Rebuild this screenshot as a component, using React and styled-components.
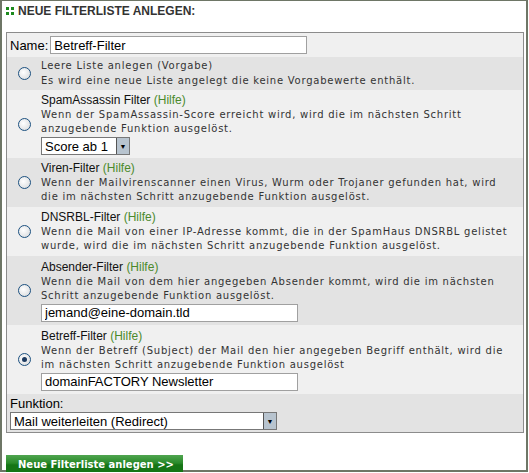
import React from 'react';
import styled, { createGlobalStyle } from 'styled-components';

const Global = createGlobalStyle`
  html, body { margin: 0; padding: 0; background: #fff; }
  body { font-family: "Liberation Sans", Arial, sans-serif; }
`;

const Frame = styled.div`
  border: 2px solid #6e7666;
  border-top: 1px solid #6e7666;
  box-sizing: border-box;
  padding: 3px 4px 0 4px;
  width: 528px;
  height: 472px;
`;

const Heading = styled.div`
  display: flex;
  align-items: center;
  gap: 4px;
  font: bold 12px "Liberation Sans", Arial, sans-serif;
  color: #333;
  height: 14px;
`;

const Dots = styled.span`
  display: grid;
  grid-template-columns: 3px 3px;
  gap: 2px;
  span { width: 3px; height: 3px; background: #1d8a1d; }
`;

const Table = styled.div`
  margin-top: 14px;
  width: 516px;
  border: 1px solid #8c8c8c;
`;

const Row = styled.div`
  display: flex;
  align-items: center;
  background: ${p => (p.$dark ? '#e3e3e3' : '#f0f0f0')};
  min-height: ${p => p.$h}px;
  box-sizing: border-box;
  padding: 2px 3px;
`;

const RadioCell = styled.div`
  width: 34px;
  display: flex;
  justify-content: center;
  flex-shrink: 0;
`;

const Radio = styled.span`
  width: 11px;
  height: 11px;
  border-radius: 50%;
  border: 1px solid #1c5180;
  background: radial-gradient(circle at 40% 40%, #fff, #d4d6d8);
  display: flex;
  align-items: center;
  justify-content: center;
  &::after {
    content: '';
    display: ${p => (p.$on ? 'block' : 'none')};
    width: 5px; height: 5px; border-radius: 50%; background: #1c3a60;
  }
`;

const Body = styled.div`
  flex: 1;
  display: flex;
  flex-direction: column;
  gap: 1px;
`;

const Title = styled.div`
  font-size: 12px;
  color: #111;
  line-height: 14px;
`;

const Help = styled.span`
  color: #4b8a2c;
`;

const Desc = styled.div`
  font: 10px "DejaVu Sans", Verdana, sans-serif;
  color: #333;
  line-height: 14px;
  letter-spacing: 0.75px;
  padding-right: 6px;
`;

const TextInput = styled.input`
  width: ${p => p.$w}px;
  height: 18px;
  box-sizing: border-box;
  border: 1px solid #a0a0a0;
  padding: 0 3px;
  font: 13px "Liberation Sans", Arial, sans-serif;
  color: #000;
  background: #fff;
`;

const Select = styled.div`
  width: ${p => p.$w}px;
  height: 18px;
  box-sizing: border-box;
  border: 1px solid #777;
  background: #fff;
  display: flex;
  align-items: center;
  justify-content: space-between;
  font: 13px "Liberation Sans", Arial, sans-serif;
  padding-left: 3px;
`;

const Arrow = styled.span`
  width: 12px;
  height: 16px;
  background: #b8c4cf;
  border-left: 1px solid #555;
  font-size: 7px;
  display: flex;
  align-items: center;
  justify-content: center;
  color: #000;
`;

const Label = styled.label`
  font-size: 13px;
  margin-right: 2px;
`;

const Button = styled.div`
  margin-top: 22px;
  width: 177px;
  height: 18px;
  background: linear-gradient(#4fa54f 0%, #2a8a2a 45%, #157515 55%, #157515 100%);
  color: #fff;
  font: bold 10px "DejaVu Sans", Verdana, sans-serif;
  white-space: nowrap;
  display: flex;
  align-items: center;
  padding-left: 12px;
  box-sizing: border-box;
`;

const filters = [
  { t: 'Leere Liste anlegen (Vorgabe)', small: true, d: 'Es wird eine neue Liste angelegt die keine Vorgabewerte enthält.', h: 33, dark: true },
  { t: 'SpamAssassin Filter', d: 'Wenn der SpamAssassin-Score erreicht wird, wird die im nächsten Schritt anzugebende Funktion ausgelöst.', h: 68, sel: true },
  { t: 'Viren-Filter', d: 'Wenn der Mailvirenscanner einen Virus, Wurm oder Trojaner gefunden hat, wird die im nächsten Schritt anzugebende Funktion ausgelöst.', h: 49, dark: true },
  { t: 'DNSRBL-Filter', d: 'Wenn die Mail von einer IP-Adresse kommt, die in der SpamHaus DNSRBL gelistet wurde, wird die im nächsten Schritt anzugebende Funktion ausgelöst.', h: 49 },
  { t: 'Absender-Filter', d: 'Wenn die Mail von dem hier angegeben Absender kommt, wird die im nächsten Schritt anzugebende Funktion ausgelöst.', h: 69, dark: true, input: 'jemand@eine-domain.tld' },
  { t: 'Betreff-Filter', d: 'Wenn der Betreff (Subject) der Mail den hier angegeben Begriff enthält, wird die im nächsten Schritt anzugebende Funktion ausgelöst', h: 69, input: 'domainFACTORY Newsletter', on: true },
];

export default function App() {
  return (
    <>
      <Global />
      <Frame>
        <Heading>
          <Dots><span /><span /><span /><span /></Dots>
          NEUE FILTERLISTE ANLEGEN:
        </Heading>
        <Table>
          <Row $h={24}>
            <Label>Name:</Label>
            <TextInput $w={257} defaultValue="Betreff-Filter" />
          </Row>
          {filters.map(f => (
            <Row key={f.t} $dark={f.dark} $h={f.h} style={{ paddingLeft: 0 }}>
              <RadioCell><Radio $on={f.on} /></RadioCell>
              <Body>
                {f.small ? <Desc>{f.t}</Desc> : <Title>{f.t} <Help>(Hilfe)</Help></Title>}
                <Desc>{f.d}</Desc>
                {f.sel && <Select $w={89}>Score ab 1<Arrow>▼</Arrow></Select>}
                {f.input && <TextInput $w={257} defaultValue={f.input} />}
              </Body>
            </Row>
          ))}
          <Row $dark $h={33} style={{ flexDirection: 'column', alignItems: 'flex-start', gap: 1 }}>
            <Label>Funktion:</Label>
            <Select $w={267}>Mail weiterleiten (Redirect)<Arrow>▼</Arrow></Select>
          </Row>
        </Table>
        <Button>Neue Filterliste anlegen &gt;&gt;</Button>
      </Frame>
    </>
  );
}
